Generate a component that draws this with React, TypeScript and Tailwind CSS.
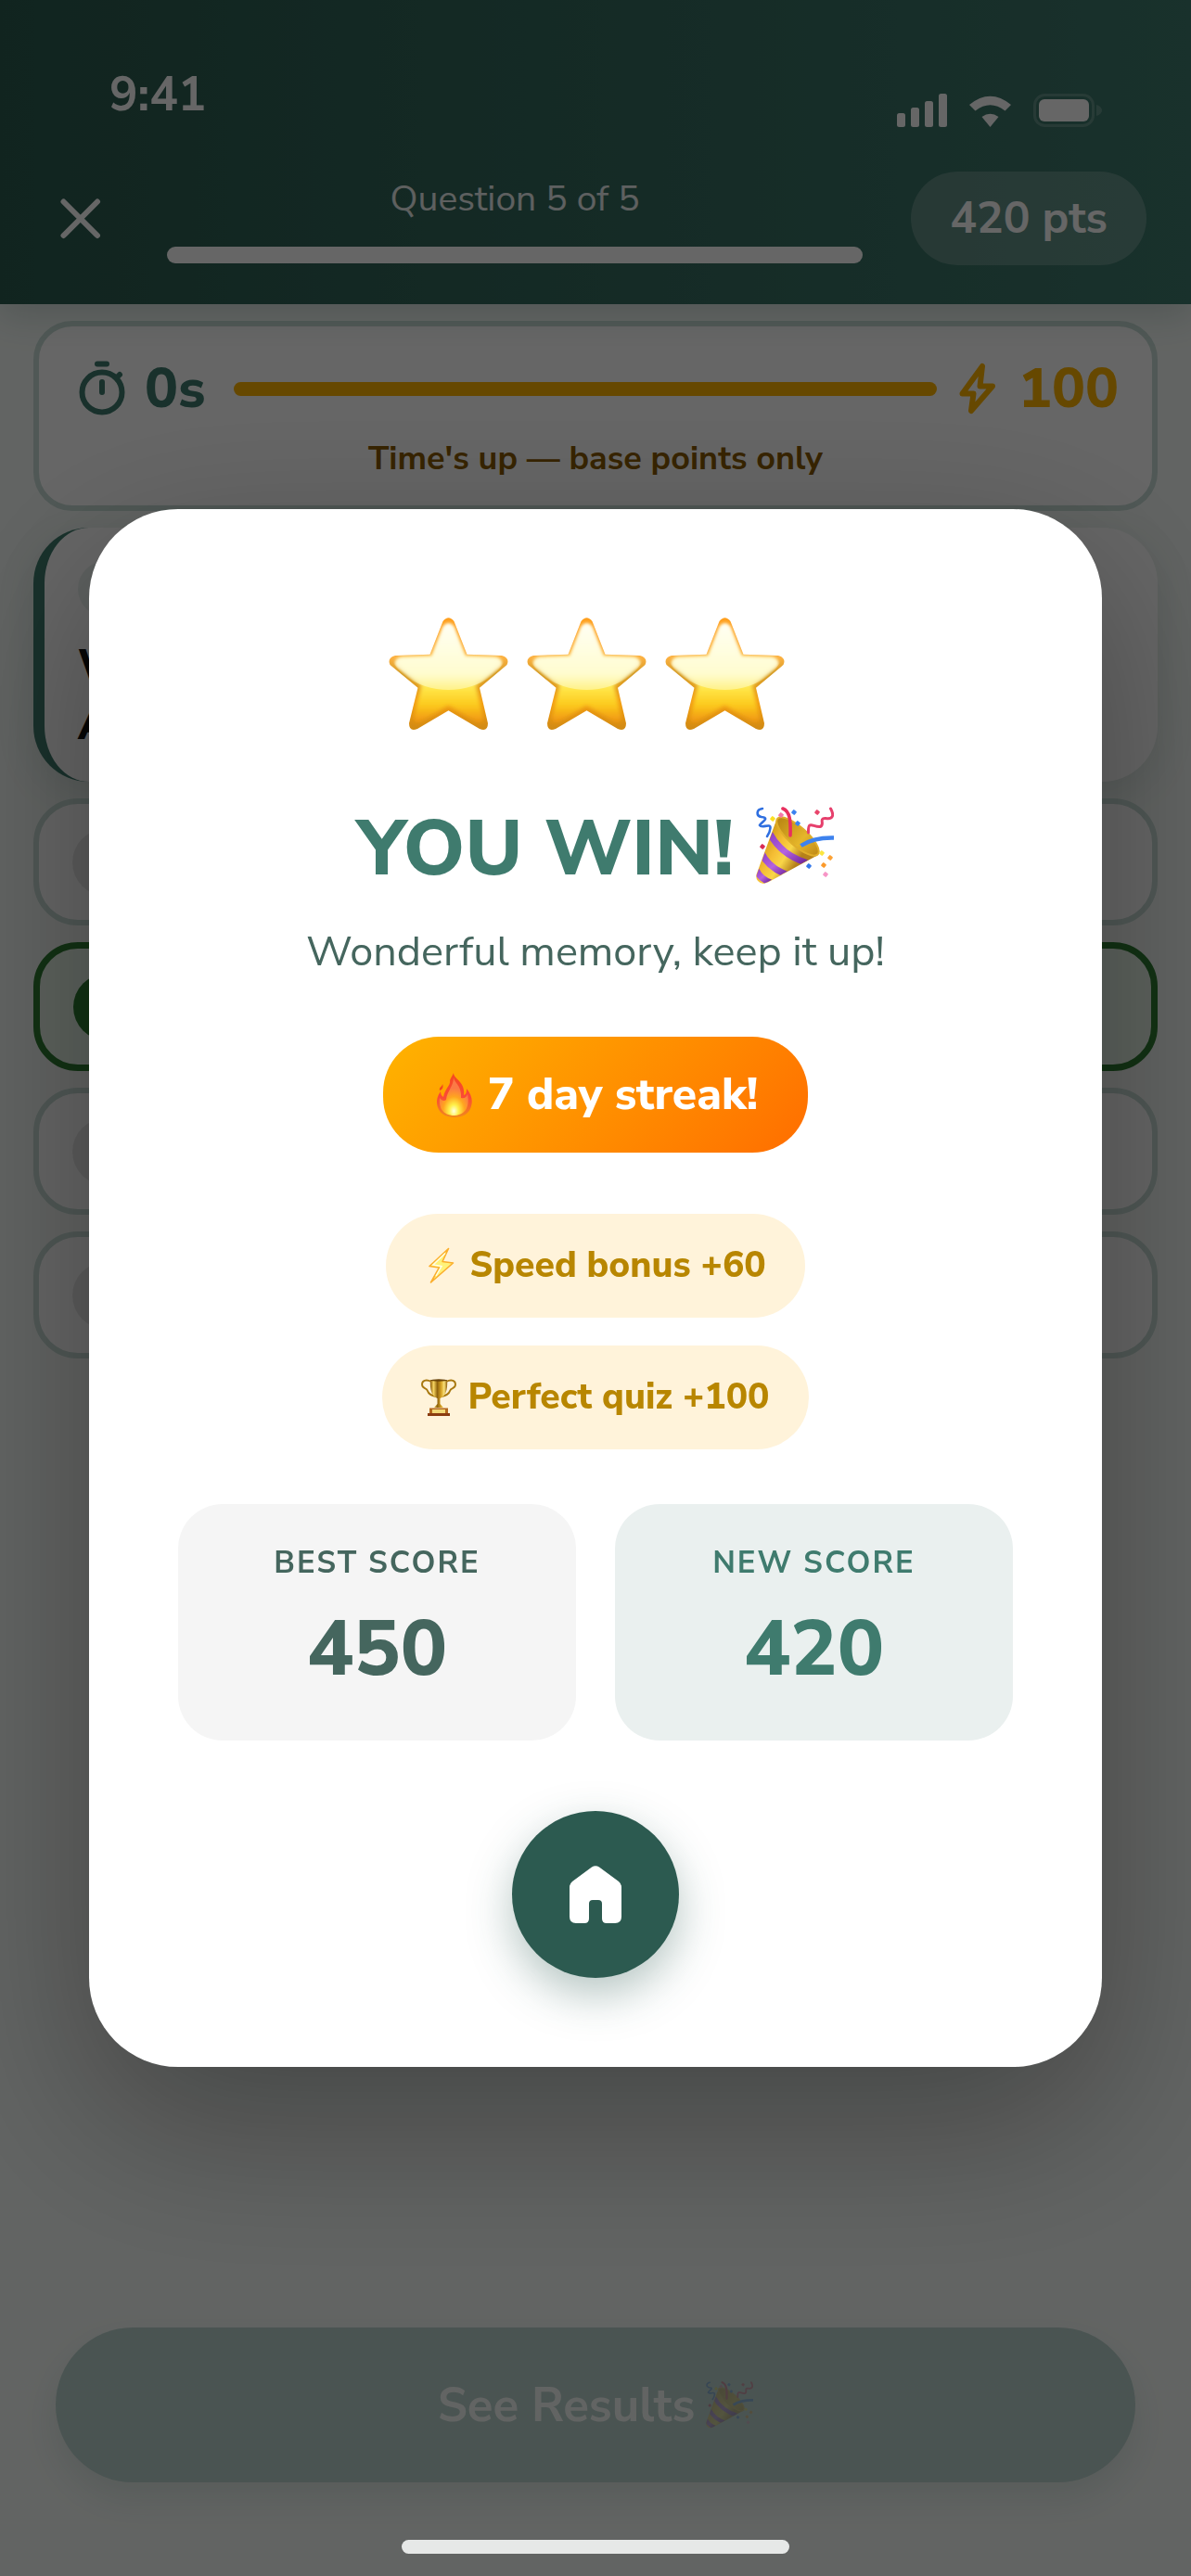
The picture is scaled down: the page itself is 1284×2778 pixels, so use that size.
import { FC, ReactNode } from "react";

interface IconProps {
	className?: string;
}

const STAR =
	"M58.5 4Q64.5 -3.5 70.5 4L84.5 39.7L122 41Q131 43.500 127.500 51L98 75.700L107 114Q107 123.500 98 120L64.500 100.300L31 120Q22 123.500 22 114L31.500 75.700L1.500 51Q-2 43.500 7 41L44.500 39.700Z";

const StarIcon: FC<IconProps> = ({ className }) => (
	<svg viewBox="0 0 129 121" className={className} aria-hidden="true">
		<defs>
			<linearGradient id="starEdge" x1="0" y1="0" x2="0" y2="1">
				<stop offset="0" stopColor="#FF9E1B" />
				<stop offset="0.36" stopColor="#FBB040" />
				<stop offset="0.5" stopColor="#D39A24" />
				<stop offset="0.75" stopColor="#F39A12" />
				<stop offset="1" stopColor="#D08A14" />
			</linearGradient>
			<linearGradient id="starBody" x1="0" y1="0" x2="0" y2="1">
				<stop offset="0" stopColor="#FFFBE0" />
				<stop offset="0.5" stopColor="#FFF29A" />
				<stop offset="0.66" stopColor="#FFE548" />
				<stop offset="0.82" stopColor="#FCCB1E" />
				<stop offset="1" stopColor="#F0930F" />
			</linearGradient>
			<linearGradient id="starGloss" x1="0" y1="0" x2="0" y2="1">
				<stop offset="0" stopColor="#FFFFF4" stopOpacity="0.9" />
				<stop offset="0.5" stopColor="#FFFFDC" stopOpacity="0.8" />
				<stop offset="0.68" stopColor="#FFF7A8" stopOpacity="0.6" />
			</linearGradient>
			<filter id="starSoft" x="-10%" y="-10%" width="120%" height="120%">
				<feGaussianBlur stdDeviation="2.6" />
			</filter>
			<filter id="starFine" x="-10%" y="-10%" width="120%" height="120%">
				<feGaussianBlur stdDeviation="1.5" />
			</filter>
			<clipPath id="starClip">
				<path d={STAR} />
			</clipPath>
			<clipPath id="starGlossClip">
				<ellipse cx="64.5" cy="26" rx="66" ry="52" />
			</clipPath>
		</defs>
		<path d={STAR} fill="url(#starEdge)" />
		<g clipPath="url(#starClip)">
			<path
				d={STAR}
				fill="url(#starBody)"
				filter="url(#starSoft)"
				transform="translate(7.7 6.4) scale(0.88)"
			/>
			<g clipPath="url(#starGlossClip)">
				<path
					d={STAR}
					fill="url(#starGloss)"
					filter="url(#starFine)"
					transform="translate(6.5 6.5) scale(0.9)"
				/>
			</g>
		</g>
	</svg>
);

const CONFETTI = [
	{ x: 27, y: 9, color: "#F577A8" },
	{ x: 41, y: 6, color: "#3B82F0" },
	{ x: 45, y: 18, color: "#3B82F0" },
	{ x: 66, y: 6, color: "#E8456B" },
	{ x: 18, y: 13, color: "#FBE022" },
	{ x: 7, y: 43, color: "#D92B55" },
	{ x: 71, y: 50, color: "#FBE640" },
	{ x: 80, y: 55, color: "#FDA235" },
	{ x: 73, y: 63, color: "#FB9A2B" },
	{ x: 57, y: 64, color: "#3478EA" },
	{ x: 75, y: 73, color: "#F795C6" },
];

const PartyIcon: FC<IconProps> = ({ className }) => (
	<svg viewBox="0 0 84 84" className={className} aria-hidden="true">
		<defs>
			<linearGradient id="cone" x1="8" y1="42" x2="42" y2="64" gradientUnits="userSpaceOnUse">
				<stop offset="0" stopColor="#D9A21C" />
				<stop offset="0.35" stopColor="#F5BE35" />
				<stop offset="0.65" stopColor="#F9D648" />
				<stop offset="1" stopColor="#B5801A" />
			</linearGradient>
			<linearGradient id="coneInside" x1="0" y1="0" x2="1" y2="0">
				<stop offset="0" stopColor="#B98412" />
				<stop offset="0.6" stopColor="#E5B62A" />
				<stop offset="1" stopColor="#C08A17" />
			</linearGradient>
			<linearGradient id="coneBand" x1="0" y1="0" x2="1" y2="1">
				<stop offset="0" stopColor="#8E3FC4" />
				<stop offset="0.5" stopColor="#B463E0" />
				<stop offset="1" stopColor="#6A1F95" />
			</linearGradient>
			<clipPath id="coneClip">
				<path d="M23 13L1 73Q-1 81 8 83L13 81L66 52Q36 46 23 13Z" />
			</clipPath>
		</defs>
		<path d="M22.500 13L0.500 73Q-1 81 8 83L13 81.500L67 52Q48 44 22.500 13Z" fill="url(#cone)" />
		<g clipPath="url(#coneClip)" fill="none" stroke="url(#coneBand)" strokeWidth="7">
			<path d="M15 29Q27 52 56 61" />
			<path d="M6 50Q14 67 36 74" />
			<path d="M0 68Q5 78 16 82" />
		</g>
		<ellipse
			cx="45"
			cy="32"
			rx="29"
			ry="10"
			transform="rotate(41.500 45 32)"
			fill="url(#coneInside)"
			stroke="#E0AE2A"
			strokeWidth="2"
		/>
		<g fill="none" strokeLinecap="round">
			<path d="M29 2C37 5 37.500 16 37 31" stroke="#E8305F" strokeWidth="3.600" />
			<path d="M48.500 42Q62 33 84 33.500" stroke="#3D82EE" strokeWidth="4.500" strokeLinecap="butt" />
			<path
				d="M7 2C0 3 0 10 6 11C16 12 5 17 4 20C6 24 16 17 15.500 23Q15 28 12 32"
				stroke="#2F6FE0"
				strokeWidth="2.600"
			/>
			<path
				d="M80.500 2C85 10 82 14 75 12.500C67 12 75 20 69 21.500C61 22 56 14 56.500 28"
				stroke="#E63F6C"
				strokeWidth="3"
			/>
		</g>
		{CONFETTI.map((bit) => (
			<rect
				key={`${bit.x}_${bit.y}`}
				x={bit.x - 2.3}
				y={bit.y - 2.3}
				width="4.6"
				height="4.6"
				rx="1"
				fill={bit.color}
				transform={`rotate(40 ${bit.x} ${bit.y})`}
			/>
		))}
	</svg>
);

const FlameIcon: FC<IconProps> = ({ className }) => (
	<svg viewBox="0 0 39 48" className={className} aria-hidden="true">
		<defs>
			<linearGradient id="flameOuter" x1="0" y1="0" x2="0" y2="1">
				<stop offset="0" stopColor="#F4481F" />
				<stop offset="0.55" stopColor="#FB4A36" />
				<stop offset="1" stopColor="#F08A1C" />
			</linearGradient>
			<radialGradient id="flameInner" cx="0.5" cy="0.88" r="0.75">
				<stop offset="0" stopColor="#FFFFE0" />
				<stop offset="0.22" stopColor="#FFF04A" />
				<stop offset="0.5" stopColor="#FFA51F" />
				<stop offset="0.8" stopColor="#FB7A45" />
			</radialGradient>
		</defs>
		<path
			d="M18 0C18 7 31 9 29 24C32 23 32 20 32 17C37 23 39 29 37 36C35 44 28 48 19 48C9 48 1 43 0 33C-0.500 27 2 23 4 20C4 23 5 25 7 26C9 16 15 14 14 8C15 5 17 3 18 0Z"
			fill="url(#flameOuter)"
		/>
		<path
			d="M18 5C19 11 27 14 26 27C30 28 32 26 33 23C35 32 34 45 19 46C6 46 2 37 3 27C5 30 8 31 10 29C11 19 18 15 18 5Z"
			fill="url(#flameInner)"
		/>
		<path d="M6 12C6 15 2 15 3 19C7 18 7 14 6 12Z" fill="#F4481F" />
	</svg>
);

const BoltEmoji: FC<IconProps> = ({ className }) => (
	<svg viewBox="0 0 28 40" className={className} aria-hidden="true">
		<path
			d="M21.500 1.500L1 20.500L11.500 22L2.500 38L26.500 17L15 15.500Z"
			fill="#FFF27A"
			stroke="#FBAE2C"
			strokeWidth="1.600"
			strokeLinejoin="round"
		/>
		<path d="M18 6.500L5 19L14 20.500L8 31" fill="none" stroke="#FFFDE6" strokeWidth="1.500" />
	</svg>
);

const TrophyIcon: FC<IconProps> = ({ className }) => (
	<svg viewBox="0 0 38 40" className={className} aria-hidden="true">
		<defs>
			<linearGradient id="cup" x1="0" y1="0" x2="1" y2="0">
				<stop offset="0" stopColor="#8A5A0A" />
				<stop offset="0.2" stopColor="#F4D25E" />
				<stop offset="0.42" stopColor="#8F620C" />
				<stop offset="0.65" stopColor="#D9A526" />
				<stop offset="0.82" stopColor="#FBE27A" />
				<stop offset="1" stopColor="#8A5A0A" />
			</linearGradient>
		</defs>
		<g fill="none" stroke="#A8780F" strokeWidth="1.900">
			<path d="M11 3C5 0 1 2 1 6C1 11 6 9 7 13C8 17 12 18 16 19" />
			<path d="M27 3C33 0 37 2 37 6C37 11 32 9 31 13C30 17 26 18 22 19" />
		</g>
		<path d="M10 1H28C29 12 26 19 20.500 21V27L24 31H14L17.500 27V21C12 19 9 12 10 1Z" fill="url(#cup)" />
		<ellipse cx="19" cy="1.500" rx="9" ry="1.200" fill="#6B450A" />
		<path d="M9 31.500H29V37H9Z" fill="#B3661B" />
		<path d="M12 33H26V37H12Z" fill="#F1D777" />
		<path d="M7 37H31V40H7Z" fill="#8A3B10" />
	</svg>
);

const StatusIcons: FC<IconProps> = ({ className }) => (
	<svg viewBox="0 0 222 36" className={className} fill="#fff" aria-hidden="true">
		<rect x="0" y="21" width="9" height="15" rx="2.500" />
		<rect x="15" y="15" width="9" height="21" rx="2.500" />
		<rect x="30" y="8" width="9" height="28" rx="2.500" />
		<rect x="45" y="0" width="9" height="36" rx="2.500" />
		<path d="M78 12Q100.500 -6.500 123 12L116.500 18.500Q100.500 6 84.500 18.500Z" />
		<path d="M91.500 25Q100.500 18.500 109.500 25L100.500 36Z" />
		<rect x="148.500" y="1.500" width="63" height="33" rx="11" fill="none" stroke="#fff" strokeOpacity="0.2" strokeWidth="3" />
		<rect x="153" y="6" width="54" height="24" rx="6" />
		<path d="M215 12C223 14 223 22 215 24Z" fillOpacity="0.2" />
	</svg>
);

const CloseIcon: FC<IconProps> = ({ className }) => (
	<svg viewBox="0 0 84 84" className={className} fill="none" stroke="#fff" strokeWidth="6" strokeLinecap="round" aria-hidden="true">
		<path d="M24.500 23.500L61 60M61 23.500L24.500 60" />
	</svg>
);

const TimerIcon: FC<IconProps> = ({ className }) => (
	<svg viewBox="0 0 64 64" className={className} fill="none" stroke="#3F7B6E" strokeWidth="6" strokeLinecap="round" aria-hidden="true">
		<circle cx="32" cy="36" r="21.500" />
		<path d="M27 5.500H37M32 25V36M48 20L51 17" />
	</svg>
);

const FlashIcon: FC<IconProps> = ({ className }) => (
	<svg viewBox="0 0 40 56" className={className} fill="none" stroke="#FFB300" strokeWidth="6" strokeLinejoin="round" aria-hidden="true">
		<path d="M25 4L22.500 25.500H36L13 52L15.500 33.500H3.500Z" />
	</svg>
);

const HomeIcon: FC<IconProps> = ({ className }) => (
	<svg viewBox="0 0 56 62" className={className} fill="#fff" aria-hidden="true">
		<path d="M24 1.500Q28 -1 32 1.500L53 17Q56 19.500 56 23V55Q56 62 49 62H40Q35 62 35 57V41Q35 37 31 37H25Q21 37 21 41V57Q21 62 16 62H7Q0 62 0 55V23Q0 19.500 3 17Z" />
	</svg>
);

interface ScoreProps {
	label: string;
	value: number;
	className: string;
}

const ScoreCard: FC<ScoreProps> = ({ label, value, className }) => (
	<div className={`flex flex-1 flex-col items-center rounded-[48px] pt-[42px] pb-[41px] ${className}`}>
		<span className="text-[33px] leading-[44px] font-bold tracking-[2px]">{label}</span>
		<span className="mt-[14px] text-[84px] leading-[114px] font-extrabold">{value}</span>
	</div>
);

const BonusPill: FC<{ children: ReactNode }> = ({ children }) => (
	<div className="flex h-28 items-center rounded-full bg-[#FFF3DA] px-[42px] text-[39px] leading-[54px] font-extrabold text-[#B88600]">
		{children}
	</div>
);

const OPTIONS = [
	{ id: "a", correct: false },
	{ id: "b", correct: true },
	{ id: "c", correct: false },
	{ id: "d", correct: false },
];

const Quiz: FC = () => (
	<div className="flex min-h-screen flex-col bg-[#F5FAF7]">
		<header className="relative bg-linear-to-r from-[#2B5B4F] to-[#3F7B6E] pb-[42px] text-white shadow-[0_12px_36px_rgba(45,91,80,0.2)]">
			<div className="flex h-[185px] items-start justify-between pr-[95px] pl-[118px]">
				<span className="pt-[72px] text-[51px] leading-[60px] font-bold">9:41</span>
				<StatusIcons className="mt-[101px] h-9 w-[222px]" />
			</div>
			<div className="flex items-center gap-[52px] pr-12 pl-11">
				<button type="button" aria-label="Close">
					<CloseIcon className="size-[84px]" />
				</button>
				<div className="flex flex-1 flex-col items-center gap-6">
					<span className="text-[39px] leading-[54px] text-white/90">Question 5 of 5</span>
					<div className="h-[18px] w-full rounded-full bg-white" />
				</div>
				<div className="rounded-full bg-white/20 px-[42px] py-5 text-[48px] leading-[61px] font-bold">420 pts</div>
			</div>
		</header>
		<main className="flex flex-col gap-[18px] px-9 pt-[18px]">
			<section className="rounded-[42px] border-6 border-[#C8DCD6] bg-white px-9 pt-[25px] pb-[26px]">
				<div className="flex h-[84px] items-center">
					<TimerIcon className="size-16" />
					<span className="ml-[14px] text-[60px] leading-[82px] font-extrabold text-[#3F7B6E]">0s</span>
					<div className="mr-6 ml-[30px] h-[15px] flex-1 rounded-full bg-[#FFB300]" />
					<FlashIcon className="h-14 w-10" />
					<span className="ml-6 text-[60px] leading-[82px] font-extrabold text-[#FFB300]">100</span>
				</div>
				<p className="mt-[9px] text-center text-[36px] leading-[49px] font-bold text-[#8A5A00]">
					Time's up — base points only
				</p>
			</section>
			<section className="rounded-[60px] border-l-12 border-[#3F7B6E] bg-white px-9 pt-9 pb-[30px] shadow-[0_12px_48px_rgba(45,91,80,0.15)]">
				<div className="h-[60px] w-60 rounded-full bg-[#EAF1EF]" />
				<p className="mt-[22px] text-[48px] leading-[63px] font-extrabold text-[#111111]">
					W<br />A
				</p>
			</section>
			{OPTIONS.map((option) =>
				option.correct ? (
					<button
						key={option.id}
						type="button"
						aria-label={`Option ${option.id}`}
						className="flex h-[139px] items-center rounded-[48px] border-7 border-[#2E7D32] bg-[#E8F5E9] px-9"
					>
						<span className="size-[72px] rounded-full bg-[#2E7D32]" />
					</button>
				) : (
					<button
						key={option.id}
						type="button"
						aria-label={`Option ${option.id}`}
						className="flex h-[137px] items-center rounded-[48px] border-6 border-[#C8DCD6] bg-white px-9"
					>
						<span className="size-[72px] rounded-full bg-[#E8E8E8]" />
					</button>
				)
			)}
		</main>
		<footer className="mt-auto px-[60px] pb-[101px]">
			<button
				type="button"
				className="flex h-[167px] w-full items-center justify-center rounded-full bg-[#B9D1CC] text-[51px] leading-[70px] font-bold text-[#F5FAF7] shadow-[0_18px_36px_rgba(45,91,80,0.12)]"
			>
				See Results
				<PartyIcon className="ml-3 size-[51px] opacity-35" />
			</button>
		</footer>
	</div>
);

const ResultModal: FC = () => (
	<div className="fixed inset-0 flex items-center bg-black/60 px-24">
		<div
			role="dialog"
			aria-modal="true"
			aria-labelledby="result-title"
			className="flex w-full flex-col items-center rounded-[96px] bg-white p-24 shadow-[0_60px_180px_rgba(0,0,0,0.32)]"
		>
			<div className="flex h-[162px] items-center gap-5 pr-5">
				<StarIcon className="h-[121px] w-[129px]" />
				<StarIcon className="h-[121px] w-[129px]" />
				<StarIcon className="h-[121px] w-[129px]" />
			</div>
			<h1
				id="result-title"
				className="mt-[52px] flex items-center gap-6 text-[84px] leading-[114px] font-extrabold text-[#3F7B6E]"
			>
				YOU WIN!
				<PartyIcon className="mb-2 size-[84px]" />
			</h1>
			<p className="mt-6 text-[45px] leading-[60px] text-[#45665E]">Wonderful memory, keep it up!</p>
			<div className="mt-[61px] flex h-[125px] items-center rounded-[60px] bg-linear-135 from-[#FFB300] to-[#FF6D00] px-[54px] text-[48px] leading-[65px] font-extrabold text-white">
				<FlameIcon className="mr-4 ml-1 h-12 w-[39px]" />
				7 day streak!
			</div>
			<div className="mt-[66px] flex flex-col items-center gap-[30px]">
				<BonusPill>
					<BoltEmoji className="mr-4 ml-1 h-10 w-7" />
					Speed bonus +60
				</BonusPill>
				<BonusPill>
					<TrophyIcon className="mr-3 h-10 w-[38px]" />
					Perfect quiz +100
				</BonusPill>
			</div>
			<div className="mt-[59px] flex w-full gap-[42px]">
				<ScoreCard label="BEST SCORE" value={450} className="bg-[#F5F5F5] text-[#45665E]" />
				<ScoreCard label="NEW SCORE" value={420} className="bg-[#EAF0EF] text-[#3F7B6E]" />
			</div>
			<button
				type="button"
				aria-label="Home"
				className="mt-[76px] flex size-[180px] items-center justify-center rounded-full bg-[#2C5A50] shadow-[0_18px_48px_rgba(44,90,80,0.35)]"
			>
				<HomeIcon className="h-[62px] w-14" />
			</button>
		</div>
	</div>
);

const App: FC = () => (
	<div className="font-['Nunito_Sans','Nunito','Lato',sans-serif]">
		<Quiz />
		<ResultModal />
		<div className="fixed inset-x-0 bottom-6 flex justify-center">
			<div className="h-[15px] w-[418px] rounded-full bg-[#E6E8E7]" />
		</div>
	</div>
);

export default App;
